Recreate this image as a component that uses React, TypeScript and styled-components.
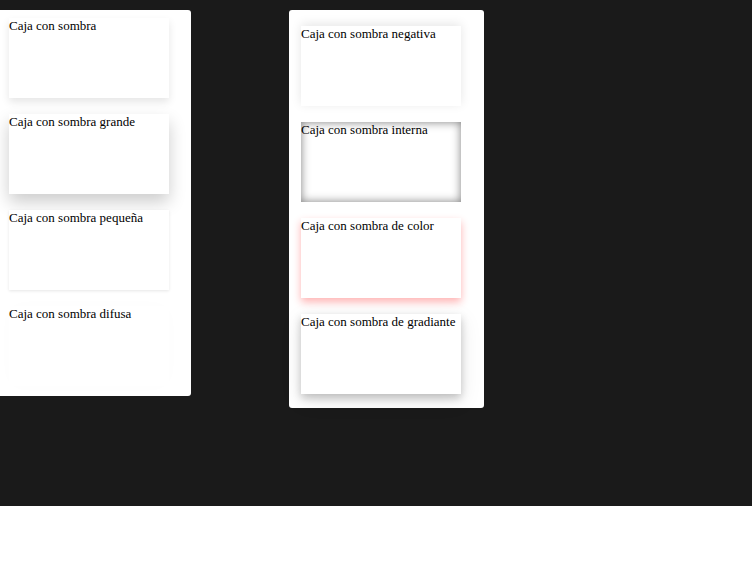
import React from "react";
import styled, { createGlobalStyle } from "styled-components";

const Global = createGlobalStyle`
  html, body { margin: 0; padding: 0; background: #ffffff; }
`;

const Stage = styled.div`
  height: 506px;
  background: #1a1a1a;
  display: flex;
  align-items: flex-start;
  padding-top: 10px;
  box-sizing: border-box;
  font-family: "Liberation Serif", "Times New Roman", serif;
`;

const Panel = styled.div<{ $pad: string; $w: number; $ml: number; $radius: string }>`
  width: ${(p) => p.$w}px;
  margin-left: ${(p) => p.$ml}px;
  padding: ${(p) => p.$pad};
  box-sizing: border-box;
  background: #ffffff;
  border-radius: ${(p) => p.$radius};
  display: flex;
  flex-direction: column;
  gap: 16px;
`;

const shadows: Record<string, string> = {
  normal: "0 4px 8px rgba(0,0,0,0.1)",
  grande: "0 8px 16px rgba(0,0,0,0.2)",
  pequena: "0 1px 3px rgba(0,0,0,0.1)",
  difusa: "0 0 20px rgba(0,0,0,0.01)",
  negativa: "0 -2px 10px rgba(0,0,0,0.1)",
  interna: "inset 0 0 10px rgba(0,0,0,0.5)",
  color: "0 4px 8px rgba(255,0,0,0.3)",
  gradiante: "0 4px 8px rgba(0,0,0,0.2), 0 6px 20px rgba(0,0,0,0.1)",
};

const Box = styled.div<{ $kind: string }>`
  width: 160px;
  height: 80px;
  background: #ffffff;
  color: #000;
  font-family: "Liberation Serif", "Times New Roman", serif;
  font-size: 13px;
  line-height: 15px;
  box-shadow: ${(p) => shadows[p.$kind]};
`;

export default function App() {
  return (
    <>
      <Global />
      <Stage>
        <Panel $w={191} $ml={0} $pad="8px 0 10px 9px" $radius="0 3px 3px 0">
          <Box $kind="normal">Caja con sombra</Box>
          <Box $kind="grande">Caja con sombra grande</Box>
          <Box $kind="pequena">Caja con sombra pequeña</Box>
          <Box $kind="difusa">Caja con sombra difusa</Box>
        </Panel>
        <Panel $w={195} $ml={98} $pad="16px 0 14px 12px" $radius="3px">
          <Box $kind="negativa">Caja con sombra negativa</Box>
          <Box $kind="interna">Caja con sombra interna</Box>
          <Box $kind="color">Caja con sombra de color</Box>
          <Box $kind="gradiante">Caja con sombra de gradiante</Box>
        </Panel>
      </Stage>
    </>
  );
}
